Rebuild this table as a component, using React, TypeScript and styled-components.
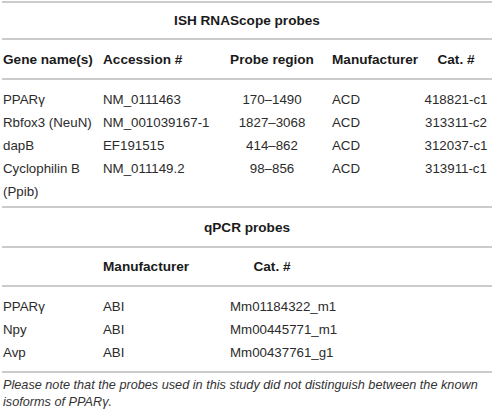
import React from "react";
import styled, { createGlobalStyle } from "styled-components";

const Global = createGlobalStyle`
  html, body { margin: 0; padding: 0; background: #fff; }
  body { font-family: "Liberation Sans", Arial, Helvetica, sans-serif; color: #231f20; }
`;

const Wrap = styled.div`
  width: 490px;
  padding: 1px 2px 0 2px;
`;

const Table = styled.table`
  width: 490px;
  border-collapse: collapse;
  table-layout: fixed;
  font-size: 13.3px;
`;

const Col = styled.col<{ $w: number }>`
  width: ${(p) => p.$w}px;
`;

const TitleCell = styled.td<{ $h: number }>`
  border-top: 2px solid #cbcbcb;
  border-bottom: 2px solid #cbcbcb;
  height: ${(p) => p.$h}px;
  padding: 0;
  text-align: center;
  font-weight: bold;
  font-size: 13.6px;
  vertical-align: middle;
  color: #1a1a1a;
`;

type Align = "left" | "center";

const HeadCell = styled.th<{ $align: Align; $pl: number; $h: number }>`
  height: ${(p) => p.$h}px;
  padding: 0 0 0 ${(p) => p.$pl}px;
  text-align: ${(p) => p.$align};
  font-weight: bold;
  font-size: 13.6px;
  vertical-align: middle;
  border-bottom: 2px solid #cbcbcb;
  white-space: nowrap;
  color: #1a1a1a;
`;

const Cell = styled.td<{ $align: Align; $pl: number; $pt: number; $pb: number }>`
  padding: ${(p) => p.$pt}px 0 ${(p) => p.$pb}px ${(p) => p.$pl}px;
  text-align: ${(p) => p.$align};
  vertical-align: top;
  line-height: 23px;
  color: #2b2b2b;
`;

const Note = styled.p`
  margin: 0;
  padding: 4px 0 0 1px;
  border-top: 2px solid #cbcbcb;
  font-size: 12.7px;
  line-height: 17px;
  font-style: italic;
  color: #333;
`;

const cols: { w: number; align: Align; pl: number }[] = [
  { w: 98, align: "left", pl: 1 },
  { w: 130, align: "left", pl: 3 },
  { w: 84, align: "center", pl: 0 },
  { w: 106, align: "left", pl: 18 },
  { w: 72, align: "center", pl: 0 },
];

const ishHead = ["Gene name(s)", "Accession #", "Probe region", "Manufacturer", "Cat. #"];
const ishRows = [
  ["PPARγ", "NM_0111463", "170–1490", "ACD", "418821-c1"],
  ["Rbfox3 (NeuN)", "NM_001039167-1", "1827–3068", "ACD", "313311-c2"],
  ["dapB", "EF191515", "414–862", "ACD", "312037-c1"],
  ["Cyclophilin B (Ppib)", "NM_011149.2", "98–856", "ACD", "313911-c1"],
];

const qHead = ["", "Manufacturer", "Cat. #", "", ""];
const qRows = [
  ["PPARγ", "ABI", "Mm01184322_m1", "", ""],
  ["Npy", "ABI", "Mm00445771_m1", "", ""],
  ["Avp", "ABI", "Mm00437761_g1", "", ""],
];

function Rows({ rows, lastPb }: { rows: string[][]; lastPb: number }) {
  return (
    <>
      {rows.map((r, i) => (
        <tr key={i}>
          {r.map((v, j) => (
            <Cell
              key={j}
              $align={cols[j].align}
              $pl={cols[j].pl}
              $pt={i === 0 ? 8 : 0}
              $pb={i === rows.length - 1 ? lastPb : 0}
            >
              {v}
            </Cell>
          ))}
        </tr>
      ))}
    </>
  );
}

function Head({ labels, h }: { labels: string[]; h: number }) {
  return (
    <tr>
      {labels.map((l, j) => (
        <HeadCell key={j} $align={cols[j].align} $pl={cols[j].pl} $h={h}>
          {l}
        </HeadCell>
      ))}
    </tr>
  );
}

export default function App() {
  return (
    <>
      <Global />
      <Wrap>
        <Table>
          <colgroup>
            {cols.map((c, i) => (
              <Col key={i} $w={c.w} />
            ))}
          </colgroup>
          <tbody>
            <tr>
              <TitleCell colSpan={5} $h={35}>ISH RNAScope probes</TitleCell>
            </tr>
            <Head labels={ishHead} h={38} />
            <Rows rows={ishRows} lastPb={3} />
            <tr>
              <TitleCell colSpan={5} $h={38}>qPCR probes</TitleCell>
            </tr>
            <Head labels={qHead} h={37} />
            <Rows rows={qRows} lastPb={7} />
          </tbody>
        </Table>
        <Note>
          Please note that the probes used in this study did not distinguish between the known
          isoforms of PPARγ.
        </Note>
      </Wrap>
    </>
  );
}
